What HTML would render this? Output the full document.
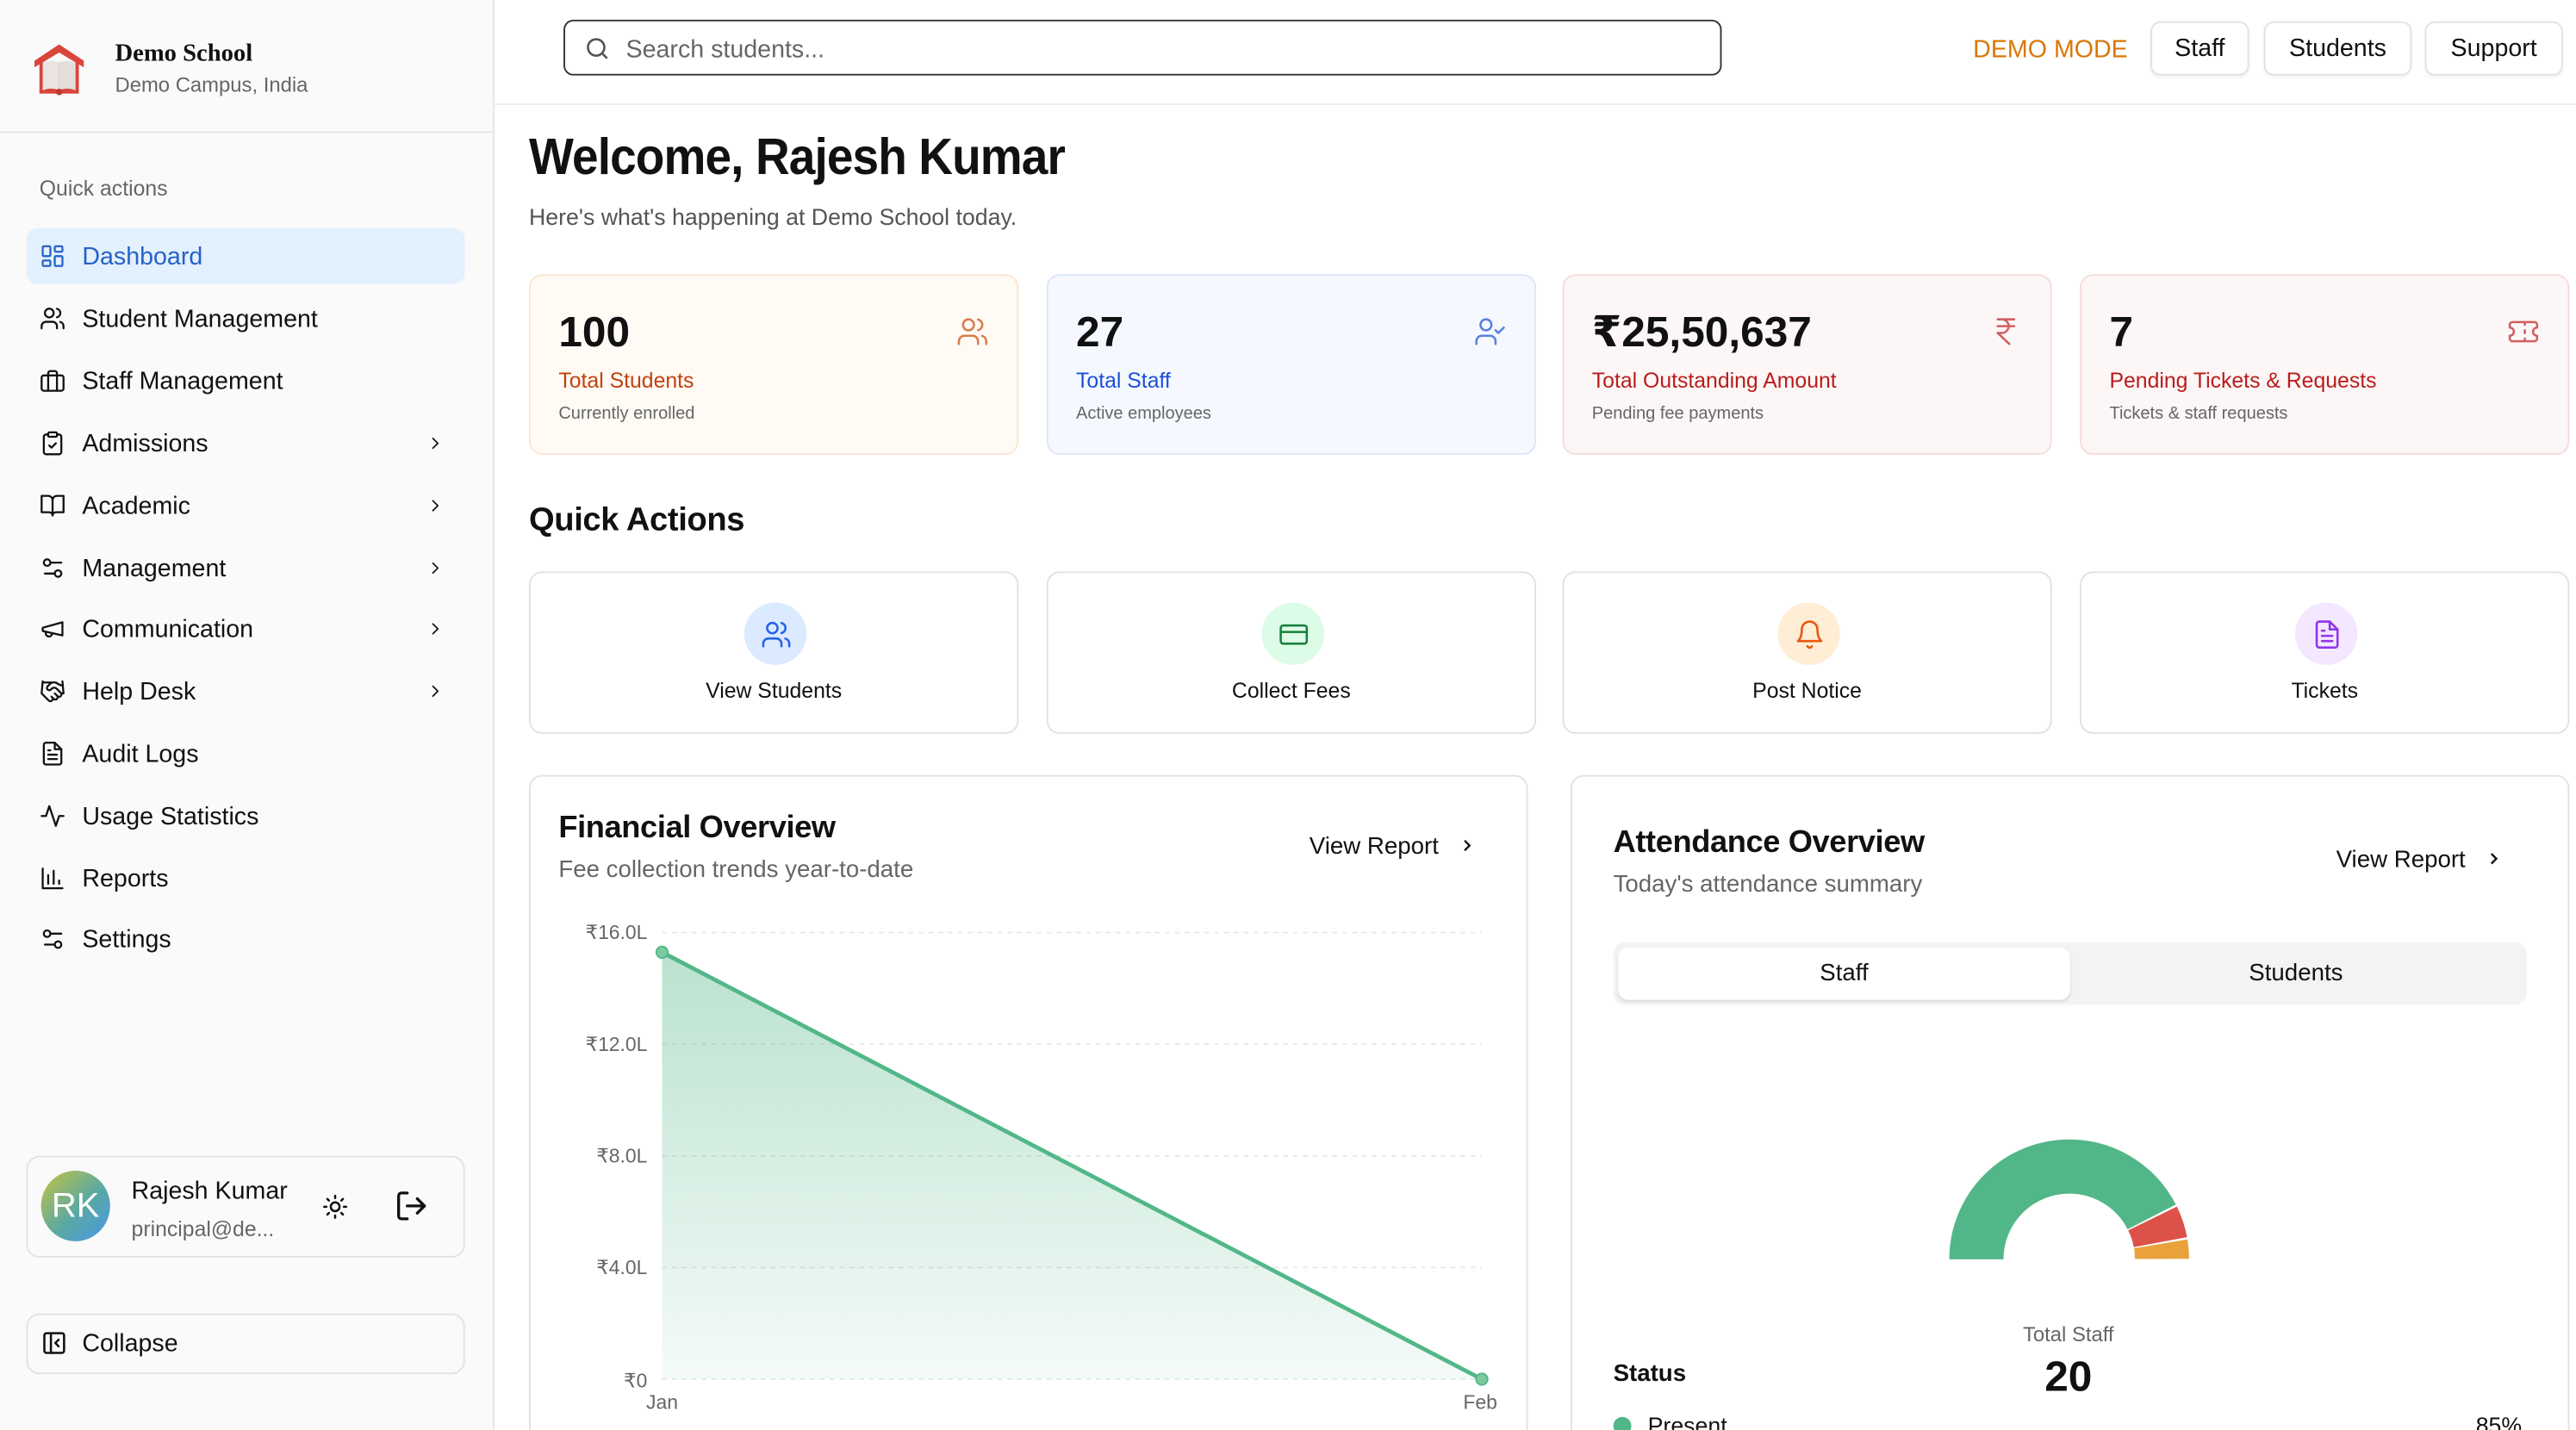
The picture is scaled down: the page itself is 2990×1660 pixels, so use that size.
<!DOCTYPE html>
<html><head><meta charset="utf-8"><style>
*{box-sizing:border-box;margin:0;padding:0}
html,body{width:2990px;height:1660px;overflow:hidden;background:#fff}
#c{position:absolute;left:0;top:0;width:1568px;height:871px;transform:scale(1.9069,1.9059);transform-origin:0 0;font-family:"Liberation Sans","DejaVu Sans",sans-serif;color:#111;overflow:hidden}
.a{position:absolute}
.side{left:0;top:0;width:301px;height:871px;background:#fafafa;border-right:1px solid #e5e5e5}
.nav{position:absolute;left:16px;width:267px;height:34px;display:flex;align-items:center;font-size:15px;color:#111}
.nav svg{width:16px;height:16px;margin-left:8px;margin-right:10px;fill:none;stroke:#111;stroke-width:1.8;stroke-linecap:round;stroke-linejoin:round}
.nav .ch{position:absolute;right:12px;width:12px;height:12px;margin:0}
.card{position:absolute;top:167px;width:298px;height:110px;border-radius:8px;border:1px solid}
.card .n{position:absolute;left:17px;top:19px;font-size:26px;font-weight:bold}
.card .l{position:absolute;left:17px;top:56px;font-size:13px}
.card .s{position:absolute;left:17px;top:78px;font-size:10.5px;color:#666}
.card svg{position:absolute;right:17px;top:24px;width:20px;height:20px;fill:none;stroke-width:1.6;stroke-linecap:round;stroke-linejoin:round}
.qa{position:absolute;top:348px;width:298px;height:99px;border:1px solid #e2e2e2;border-radius:8px;background:#fff}
.qa .ic{position:absolute;left:130px;top:18px;width:38px;height:38px;border-radius:50%;display:flex;align-items:center;justify-content:center}
.qa .ic svg{width:19px;height:19px;fill:none;stroke-width:1.7;stroke-linecap:round;stroke-linejoin:round}
.qa .t{position:absolute;left:0;right:0;top:64px;text-align:center;font-size:13px}
.btn{position:absolute;top:13px;height:33px;border:1px solid #e2e2e2;border-radius:6px;font-size:15px;display:flex;align-items:center;justify-content:center;box-shadow:0 1px 2px rgba(0,0,0,.06);background:#fff}
.h{font-weight:bold;letter-spacing:-.2px}
</style></head><body><div id="c">
<div class="a side">
 <svg class="a" style="left:20px;top:25px" width="32" height="34" viewBox="0 0 32 34"><path d="M1 12 L16 2 L31 12 L31 16 L16 7 L1 16Z" fill="#d9453a"/><rect x="4" y="13" width="24" height="19" fill="#d9453a"/><path d="M6 13 Q11 11 16 13 L16 30 Q11 28 6 30Z" fill="#e9e4e2"/><path d="M26 13 Q21 11 16 13 L16 30 Q21 28 26 30Z" fill="#e4dedb"/><circle cx="16" cy="31" r="2" fill="#c0392b"/></svg>
 <div class="a" style="left:70px;top:25px;font-family:'Liberation Serif',serif;font-weight:bold;font-size:15px">Demo School</div>
 <div class="a" style="left:70px;top:45px;font-size:12.5px;color:#666">Demo Campus, India</div>
 <div class="a" style="left:0;top:80px;width:301px;border-top:1px solid #e3e3e3"></div>
 <div class="a" style="left:24px;top:107px;font-size:13px;color:#666">Quick actions</div>
 <div class="nav" style="top:139px;background:#e3f0fd;border-radius:7px;color:#2563c9"><svg viewBox="0 0 24 24" style="stroke:#2563c9"><rect x="3" y="3" width="7" height="9" rx="1"/><rect x="14" y="3" width="7" height="5" rx="1"/><rect x="14" y="12" width="7" height="9" rx="1"/><rect x="3" y="16" width="7" height="5" rx="1"/></svg>Dashboard</div>
 <div class="nav" style="top:177px"><svg viewBox="0 0 24 24"><circle cx="9" cy="7" r="4"/><path d="M2 21v-2a4 4 0 0 1 4-4h6a4 4 0 0 1 4 4v2M16 3.1a4 4 0 0 1 0 7.8M22 21v-2a4 4 0 0 0-3-3.9"/></svg>Student Management</div>
 <div class="nav" style="top:215px"><svg viewBox="0 0 24 24"><rect x="2" y="7" width="20" height="14" rx="2"/><path d="M16 21V5a2 2 0 0 0-2-2h-4a2 2 0 0 0-2 2v16"/></svg>Staff Management</div>
 <div class="nav" style="top:253px"><svg viewBox="0 0 24 24"><rect x="8" y="2" width="8" height="4" rx="1"/><path d="M16 4h2a2 2 0 0 1 2 2v14a2 2 0 0 1-2 2H6a2 2 0 0 1-2-2V6a2 2 0 0 1 2-2h2M9 14l2 2 4-4"/></svg>Admissions<svg class="ch" viewBox="0 0 24 24"><path d="M9 18l6-6-6-6"/></svg></div>
 <div class="nav" style="top:291px"><svg viewBox="0 0 24 24"><path d="M2 3h6a4 4 0 0 1 4 4v14a3 3 0 0 0-3-3H2zM22 3h-6a4 4 0 0 0-4 4v14a3 3 0 0 1 3-3h7z"/></svg>Academic<svg class="ch" viewBox="0 0 24 24"><path d="M9 18l6-6-6-6"/></svg></div>
 <div class="nav" style="top:329px"><svg viewBox="0 0 24 24"><path d="M20 7h-9M14 17H5"/><circle cx="17" cy="17" r="3"/><circle cx="7" cy="7" r="3"/></svg>Management<svg class="ch" viewBox="0 0 24 24"><path d="M9 18l6-6-6-6"/></svg></div>
 <div class="nav" style="top:366px"><svg viewBox="0 0 24 24"><path d="M3 11l18-5v12L3 14v-3zM11.6 16.8a3 3 0 1 1-5.8-1.6"/></svg>Communication<svg class="ch" viewBox="0 0 24 24"><path d="M9 18l6-6-6-6"/></svg></div>
 <div class="nav" style="top:404px"><svg viewBox="0 0 24 24"><path d="M11 17l2 2a1 1 0 1 0 3-3M14 14l2.5 2.5a1 1 0 1 0 3-3l-3.9-3.9a3 3 0 0 0-4.2 0l-.9.9a1 1 0 1 1-3-3l2.8-2.8a5.8 5.8 0 0 1 7 .9L21 7M21 3l1 11h-2M3 3L2 14l6.5 6.5a1 1 0 1 0 3-3M3 4h8"/></svg>Help Desk<svg class="ch" viewBox="0 0 24 24"><path d="M9 18l6-6-6-6"/></svg></div>
 <div class="nav" style="top:442px"><svg viewBox="0 0 24 24"><path d="M14 2H6a2 2 0 0 0-2 2v16a2 2 0 0 0 2 2h12a2 2 0 0 0 2-2V8z"/><path d="M14 2v6h6M16 13H8M16 17H8M10 9H8"/></svg>Audit Logs</div>
 <div class="nav" style="top:480px"><svg viewBox="0 0 24 24"><path d="M22 12h-4l-3 9L9 3l-3 9H2"/></svg>Usage Statistics</div>
 <div class="nav" style="top:518px"><svg viewBox="0 0 24 24"><path d="M3 3v18h18M8 17V9M13 17V5M18 17v-3"/></svg>Reports</div>
 <div class="nav" style="top:555px"><svg viewBox="0 0 24 24"><path d="M20 7h-9M14 17H5"/><circle cx="17" cy="17" r="3"/><circle cx="7" cy="7" r="3"/></svg>Settings</div>
 <div class="a" style="left:16px;top:704px;width:267px;height:62px;border:1px solid #e2e2e2;border-radius:8px"></div>
 <div class="a" style="left:25px;top:713px;width:42px;height:43px;border-radius:50%;background:linear-gradient(135deg,#c7c43f,#5aa9a3 55%,#4797e6);color:#fff;font-size:21px;display:flex;align-items:center;justify-content:center">RK</div>
 <div class="a" style="left:80px;top:717px;font-size:15px">Rajesh Kumar</div>
 <div class="a" style="left:80px;top:741px;font-size:13px;color:#666">principal@de...</div>
 <svg class="a" style="left:196px;top:727px" width="16" height="16" viewBox="0 0 24 24" fill="none" stroke="#111" stroke-width="2" stroke-linecap="round"><circle cx="12" cy="12" r="4"/><path d="M12 2v2M12 20v2M4.9 4.9l1.4 1.4M17.7 17.7l1.4 1.4M2 12h2M20 12h2M6.3 17.7l-1.4 1.4M19.1 4.9l-1.4 1.4"/></svg>
 <svg class="a" style="left:240px;top:724px" width="21" height="21" viewBox="0 0 24 24" fill="none" stroke="#111" stroke-width="2" stroke-linecap="round" stroke-linejoin="round"><path d="M9 21H5a2 2 0 0 1-2-2V5a2 2 0 0 1 2-2h4M16 17l5-5-5-5M21 12H9"/></svg>
 <div class="a" style="left:16px;top:800px;width:267px;height:37px;border:1px solid #e2e2e2;border-radius:8px"></div>
 <svg class="a" style="left:25px;top:810px" width="16" height="16" viewBox="0 0 24 24" fill="none" stroke="#111" stroke-width="2" stroke-linecap="round" stroke-linejoin="round"><rect x="3" y="3" width="18" height="18" rx="2"/><path d="M9 3v18M16 15l-3-3 3-3"/></svg>
 <div class="a" style="left:50px;top:810px;font-size:15px">Collapse</div>
</div>
<div class="a" style="left:301px;top:63px;width:1267px;border-top:1px solid #eee"></div>
<div class="a" style="left:343px;top:12px;width:705px;height:34px;border:1px solid #333;border-radius:6px"></div>
<svg class="a" style="left:356px;top:22px" width="15" height="15" viewBox="0 0 24 24" fill="none" stroke="#555" stroke-width="2.2" stroke-linecap="round"><circle cx="11" cy="11" r="8"/><path d="M21 21l-4.3-4.3"/></svg>
<div class="a" style="left:381px;top:22px;font-size:15px;color:#666">Search students...</div>
<div class="a" style="left:1201px;top:22px;font-size:15px;color:#d97706">DEMO MODE</div>
<div class="btn" style="left:1309px;width:60px">Staff</div>
<div class="btn" style="left:1378px;width:90px">Students</div>
<div class="btn" style="left:1476px;width:84px">Support</div>
<div class="a" style="left:322px;top:78px;font-size:31px;letter-spacing:-.5px;font-weight:bold;transform:scaleX(.93);transform-origin:0 0">Welcome, Rajesh Kumar</div>
<div class="a" style="left:322px;top:124px;font-size:14px;color:#555">Here's what's happening at Demo School today.</div>
<div class="card" style="left:322px;background:#fffaf4;border-color:#fbe6d2"><div class="n">100</div><div class="l" style="color:#c2410c">Total Students</div><div class="s">Currently enrolled</div><svg viewBox="0 0 24 24" stroke="#d97c50"><circle cx="9" cy="7" r="4"/><path d="M2 21v-2a4 4 0 0 1 4-4h6a4 4 0 0 1 4 4v2M16 3.1a4 4 0 0 1 0 7.8M22 21v-2a4 4 0 0 0-3-3.9"/></svg></div>
<div class="card" style="left:637px;background:#f5f9ff;border-color:#dbe6fb"><div class="n">27</div><div class="l" style="color:#1d4ed8">Total Staff</div><div class="s">Active employees</div><svg viewBox="0 0 24 24" stroke="#5b7fe0"><circle cx="9" cy="7" r="4"/><path d="M2 21v-2a4 4 0 0 1 4-4h6a4 4 0 0 1 4 4v2M16 11l2 2 4-4"/></svg></div>
<div class="card" style="left:951px;background:#fcf6f6;border-color:#f6dcdc"><div class="n">₹25,50,637</div><div class="l" style="color:#b91c1c">Total Outstanding Amount</div><div class="s">Pending fee payments</div><svg viewBox="0 0 24 24" stroke="#d06060"><path d="M6 3h12M6 8h12M6 13l8.5 8M6 13h3a5 5 0 0 0 0-10"/></svg></div>
<div class="card" style="left:1266px;background:#fcf6f6;border-color:#f6dcdc"><div class="n">7</div><div class="l" style="color:#b91c1c">Pending Tickets &amp; Requests</div><div class="s">Tickets &amp; staff requests</div><svg viewBox="0 0 24 24" stroke="#d06060"><path d="M2 9a3 3 0 0 1 0 6v2a2 2 0 0 0 2 2h16a2 2 0 0 0 2-2v-2a3 3 0 0 1 0-6V7a2 2 0 0 0-2-2H4a2 2 0 0 0-2 2zM13 5v2M13 17v2M13 11v2"/></svg></div>
<div class="a h" style="left:322px;top:306px;font-size:20px">Quick Actions</div>
<div class="qa" style="left:322px"><div class="ic" style="background:#dbeafe"><svg viewBox="0 0 24 24" stroke="#2563eb"><circle cx="9" cy="7" r="4"/><path d="M2 21v-2a4 4 0 0 1 4-4h6a4 4 0 0 1 4 4v2M16 3.1a4 4 0 0 1 0 7.8M22 21v-2a4 4 0 0 0-3-3.9"/></svg></div><div class="t">View Students</div></div>
<div class="qa" style="left:637px"><div class="ic" style="background:#dcfce7"><svg viewBox="0 0 24 24" stroke="#16803d"><rect x="2" y="5" width="20" height="14" rx="2"/><path d="M2 10h20"/></svg></div><div class="t">Collect Fees</div></div>
<div class="qa" style="left:951px"><div class="ic" style="background:#ffedd5"><svg viewBox="0 0 24 24" stroke="#ea580c"><path d="M6 8a6 6 0 0 1 12 0c0 7 3 9 3 9H3s3-2 3-9M10.3 21a1.9 1.9 0 0 0 3.4 0"/></svg></div><div class="t">Post Notice</div></div>
<div class="qa" style="left:1266px"><div class="ic" style="background:#f3e8ff"><svg viewBox="0 0 24 24" stroke="#9333ea"><path d="M14 2H6a2 2 0 0 0-2 2v16a2 2 0 0 0 2 2h12a2 2 0 0 0 2-2V8z"/><path d="M14 2v6h6M16 13H8M16 17H8M10 9H8"/></svg></div><div class="t">Tickets</div></div>
<div class="a" style="left:322px;top:472px;width:608px;height:420px;border:1px solid #e2e2e2;border-radius:8px"></div>
<div class="a h" style="left:340px;top:494px;font-size:19px">Financial Overview</div>
<div class="a" style="left:340px;top:522px;font-size:14.5px;color:#666">Fee collection trends year-to-date</div>
<div class="a" style="left:797px;top:508px;font-size:14.5px">View Report</div>
<svg class="a" style="left:887px;top:509px" width="12" height="12" viewBox="0 0 24 24" fill="none" stroke="#111" stroke-width="2.5"><path d="M9 18l6-6-6-6"/></svg>
<svg class="a" style="left:322px;top:540px" width="608" height="331" viewBox="322 540 608 331" font-family="Liberation Sans, DejaVu Sans, sans-serif" font-size="12" fill="#666">
<defs><linearGradient id="g" x1="0" y1="0" x2="0" y2="1"><stop offset="0" stop-color="#52b788" stop-opacity=".4"/><stop offset="1" stop-color="#52b788" stop-opacity=".06"/></linearGradient></defs>
<g stroke="#e8e8e8" stroke-dasharray="3 3"><path d="M403 568H902M403 636H902M403 704H902M403 772H902M403 840H902"/></g>
<text x="394" y="572" text-anchor="end">₹16.0L</text><text x="394" y="640" text-anchor="end">₹12.0L</text><text x="394" y="708" text-anchor="end">₹8.0L</text><text x="394" y="776" text-anchor="end">₹4.0L</text><text x="394" y="845" text-anchor="end">₹0</text>
<text x="403" y="858" text-anchor="middle">Jan</text><text x="901" y="858" text-anchor="middle">Feb</text>
<path d="M403 580L902 840H403Z" fill="url(#g)"/>
<path d="M403 580L902 840" stroke="#52b788" stroke-width="2.5" fill="none"/>
<circle cx="403" cy="580" r="3.5" fill="#7ccaa0" stroke="#52b788"/><circle cx="902" cy="840" r="3.5" fill="#7ccaa0" stroke="#52b788"/>
</svg>
<div class="a" style="left:956px;top:472px;width:608px;height:420px;border:1px solid #e2e2e2;border-radius:8px"></div>
<div class="a h" style="left:982px;top:503px;font-size:19px">Attendance Overview</div>
<div class="a" style="left:982px;top:531px;font-size:14.5px;color:#666">Today's attendance summary</div>
<div class="a" style="left:1422px;top:516px;font-size:14.5px">View Report</div>
<svg class="a" style="left:1512px;top:517px" width="12" height="12" viewBox="0 0 24 24" fill="none" stroke="#111" stroke-width="2.5"><path d="M9 18l6-6-6-6"/></svg>
<div class="a" style="left:982px;top:574px;width:556px;height:38px;background:#f3f3f3;border-radius:7px"></div>
<div class="a" style="left:985px;top:577px;width:275px;height:32px;background:#fff;border-radius:6px;box-shadow:0 1px 2px rgba(0,0,0,.1);font-size:14.5px;display:flex;align-items:center;justify-content:center">Staff</div>
<div class="a" style="left:1260px;top:577px;width:275px;height:32px;font-size:14.5px;display:flex;align-items:center;justify-content:center">Students</div>
<svg class="a" style="left:1180px;top:690px" width="160" height="80" viewBox="1180 690 160 80" fill="none">
<path d="M1203 767A56.5 56.5 0 0 1 1316 767" pathLength="100" stroke="#52b788" stroke-width="33" stroke-dasharray="85 200"/>
<path d="M1203 767A56.5 56.5 0 0 1 1316 767" pathLength="100" stroke="#dc524b" stroke-width="33" stroke-dasharray="0 85.6 8.6 200"/>
<path d="M1203 767A56.5 56.5 0 0 1 1316 767" pathLength="100" stroke="#e9a23b" stroke-width="33" stroke-dasharray="0 94.8 5.2 200"/>
</svg>
<div class="a" style="left:1159px;top:806px;width:200px;text-align:center;font-size:12.5px;color:#666">Total Staff</div>
<div class="a" style="left:1159px;top:823px;width:200px;text-align:center;font-size:26px;font-weight:bold">20</div>
<div class="a" style="left:982px;top:829px;font-size:14.5px;font-weight:bold">Status</div>
<div class="a" style="left:982px;top:863px;width:11px;height:11px;border-radius:50%;background:#52b788"></div>
<div class="a" style="left:1003px;top:860px;font-size:14px">Present</div>
<div class="a" style="left:1507px;top:860px;font-size:14px">85%</div>
</div></body></html>
